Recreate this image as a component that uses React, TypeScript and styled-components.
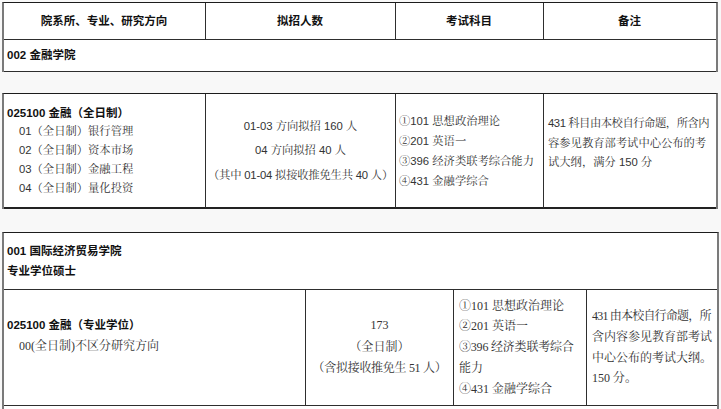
import React from 'react';
import styled, { createGlobalStyle } from 'styled-components';

const GlobalStyle = createGlobalStyle`
  html, body {
    margin: 0;
    padding: 0;
    background: #f8f8f8;
  }
  body {
    width: 721px;
    height: 409px;
    overflow: hidden;
  }
  * {
    box-sizing: border-box;
  }
`;

const SANS = `"Liberation Sans", "Noto Serif CJK SC", "Noto Sans CJK SC", sans-serif`;
const SERIF = `"Liberation Serif", "Noto Serif CJK SC", "Noto Sans CJK SC", serif`;
const BOLD = `"Liberation Sans", "Noto Sans CJK SC", sans-serif`;

const Page = styled.div`
  display: flex;
  flex-direction: column;
  align-items: flex-start;
  width: 721px;
  height: 409px;
  padding: 2px 0 0 2px;
`;

const Block = styled.div<{
  $cols: string;
  $rows: string;
  $width: number;
  $gap?: number;
  $serif?: boolean;
}>`
  display: grid;
  grid-template-columns: ${(p) => p.$cols};
  grid-template-rows: ${(p) => p.$rows};
  width: ${(p) => p.$width}px;
  flex-shrink: 0;
  margin-bottom: ${(p) => p.$gap ?? 0}px;
  background: #fff;
  border-top: 1px solid #1c1c1c;
  border-left: 2px solid #7a7a7a;
  border-right: 2px solid #7a7a7a;
  font-family: ${(p) => (p.$serif ? SERIF : SANS)};
  font-size: ${(p) => (p.$serif ? 12 : 11.3)}px;
  color: #333;
`;

const Cell = styled.div<{
  $span?: number;
  $top?: number;
  $center?: boolean;
  $pl?: number;
  $pr?: number;
  $end?: boolean;
  $thick?: boolean;
}>`
  grid-column: span ${(p) => p.$span ?? 1};
  display: flex;
  flex-direction: column;
  justify-content: ${(p) => (p.$top !== undefined ? 'flex-start' : 'center')};
  align-items: ${(p) => (p.$center ? 'center' : 'stretch')};
  min-width: 0;
  padding: ${(p) => p.$top ?? 0}px ${(p) => p.$pr ?? 4}px 0
    ${(p) => p.$pl ?? 3}px;
  border-right: ${(p) => (p.$end ? 'none' : '1px solid #2e2e2e')};
  border-bottom: ${(p) => (p.$thick ? '2px solid #222' : '1px solid #2e2e2e')};
`;

const Line = styled.div<{ $lh: number; $indent?: number; $ls?: number }>`
  height: ${(p) => p.$lh}px;
  line-height: ${(p) => p.$lh}px;
  padding-left: ${(p) => p.$indent ?? 0}px;
  letter-spacing: ${(p) => p.$ls ?? 0}px;
  white-space: nowrap;
`;

const Head = styled.div<{ $lh?: number }>`
  font-family: ${BOLD};
  font-weight: 700;
  font-size: 11.5px;
  color: #111;
  line-height: ${(p) => p.$lh ?? 19}px;
  white-space: nowrap;
`;

const Blank = styled.div`
  grid-column: span 4;
  height: 4px;
`;

const T1_COLS = '202px 190px 148px 172px';
const T2_COLS = '302px 148px 133px 130px';

export default function App() {
  return (
    <>
      <GlobalStyle />
      <Page>
        <Block $cols={T1_COLS} $rows="37px 32px" $width={716} $gap={21}>
          <Cell $center>
            <Head>院系所、专业、研究方向</Head>
          </Cell>
          <Cell $center>
            <Head>拟招人数</Head>
          </Cell>
          <Cell $center>
            <Head>考试科目</Head>
          </Cell>
          <Cell $center $end>
            <Head>备注</Head>
          </Cell>
          <Cell $span={4} $end>
            <Head>002 金融学院</Head>
          </Cell>
        </Block>

        <Block $cols={T1_COLS} $rows="115px" $width={716} $gap={23}>
          <Cell $thick>
            <Head $lh={18.7}>025100 金融（全日制）</Head>
            <Line $lh={18.7} $indent={12}>01（全日制）银行管理</Line>
            <Line $lh={18.7} $indent={12}>02（全日制）资本市场</Line>
            <Line $lh={18.7} $indent={12}>03（全日制）金融工程</Line>
            <Line $lh={18.7} $indent={12}>04（全日制）量化投资</Line>
          </Cell>
          <Cell $center $thick $pl={0} $pr={0}>
            <Line $lh={24.5}>01-03 方向拟招 160 人</Line>
            <Line $lh={24.5}>04 方向拟招 40 人</Line>
            <Line $lh={24.5} $ls={-0.2}>（其中 01-04 拟接收推免生共 40 人）</Line>
          </Cell>
          <Cell $thick>
            <Line $lh={20}>①101 思想政治理论</Line>
            <Line $lh={20}>②201 英语一</Line>
            <Line $lh={20}>③396 经济类联考综合能力</Line>
            <Line $lh={20}>④431 金融学综合</Line>
          </Cell>
          <Cell $top={20} $pl={4} $pr={5} $end $thick>
            <Line $lh={19.5} $ls={-0.45}>431 科目由本校自行命题，所含内</Line>
            <Line $lh={19.5}>容参见教育部考试中心公布的考</Line>
            <Line $lh={19.5}>试大纲，满分 150 分</Line>
          </Cell>
        </Block>

        <Block $cols={T2_COLS} $rows="57px 116px 10px" $width={717} $serif>
          <Cell $span={4} $end>
            <Head $lh={20}>001 国际经济贸易学院</Head>
            <Head $lh={20}>专业学位硕士</Head>
          </Cell>
          <Cell $top={25}>
            <Head $lh={21}>025100 金融（专业学位）</Head>
            <Line $lh={21} $indent={12}>00(全日制)不区分研究方向</Line>
          </Cell>
          <Cell $center $pl={0} $pr={0}>
            <Line $lh={21.5}>173</Line>
            <Line $lh={21.5}>（全日制）</Line>
            <Line $lh={21.5} $ls={-0.3}>（含拟接收推免生 51 人）</Line>
          </Cell>
          <Cell $pl={5}>
            <Line $lh={20.8}>①101 思想政治理论</Line>
            <Line $lh={20.8}>②201 英语一</Line>
            <Line $lh={20.8} $ls={-0.2}>③396 经济类联考综合</Line>
            <Line $lh={20.8}>能力</Line>
            <Line $lh={20.8}>④431 金融学综合</Line>
          </Cell>
          <Cell $pl={5} $pr={5} $end>
            <Line $lh={20.7} $ls={-0.8}>431 由本校自行命题，所</Line>
            <Line $lh={20.7}>含内容参见教育部考试</Line>
            <Line $lh={20.7}>中心公布的考试大纲。</Line>
            <Line $lh={20.7}>150 分。</Line>
          </Cell>
          <Blank />
        </Block>
      </Page>
    </>
  );
}
